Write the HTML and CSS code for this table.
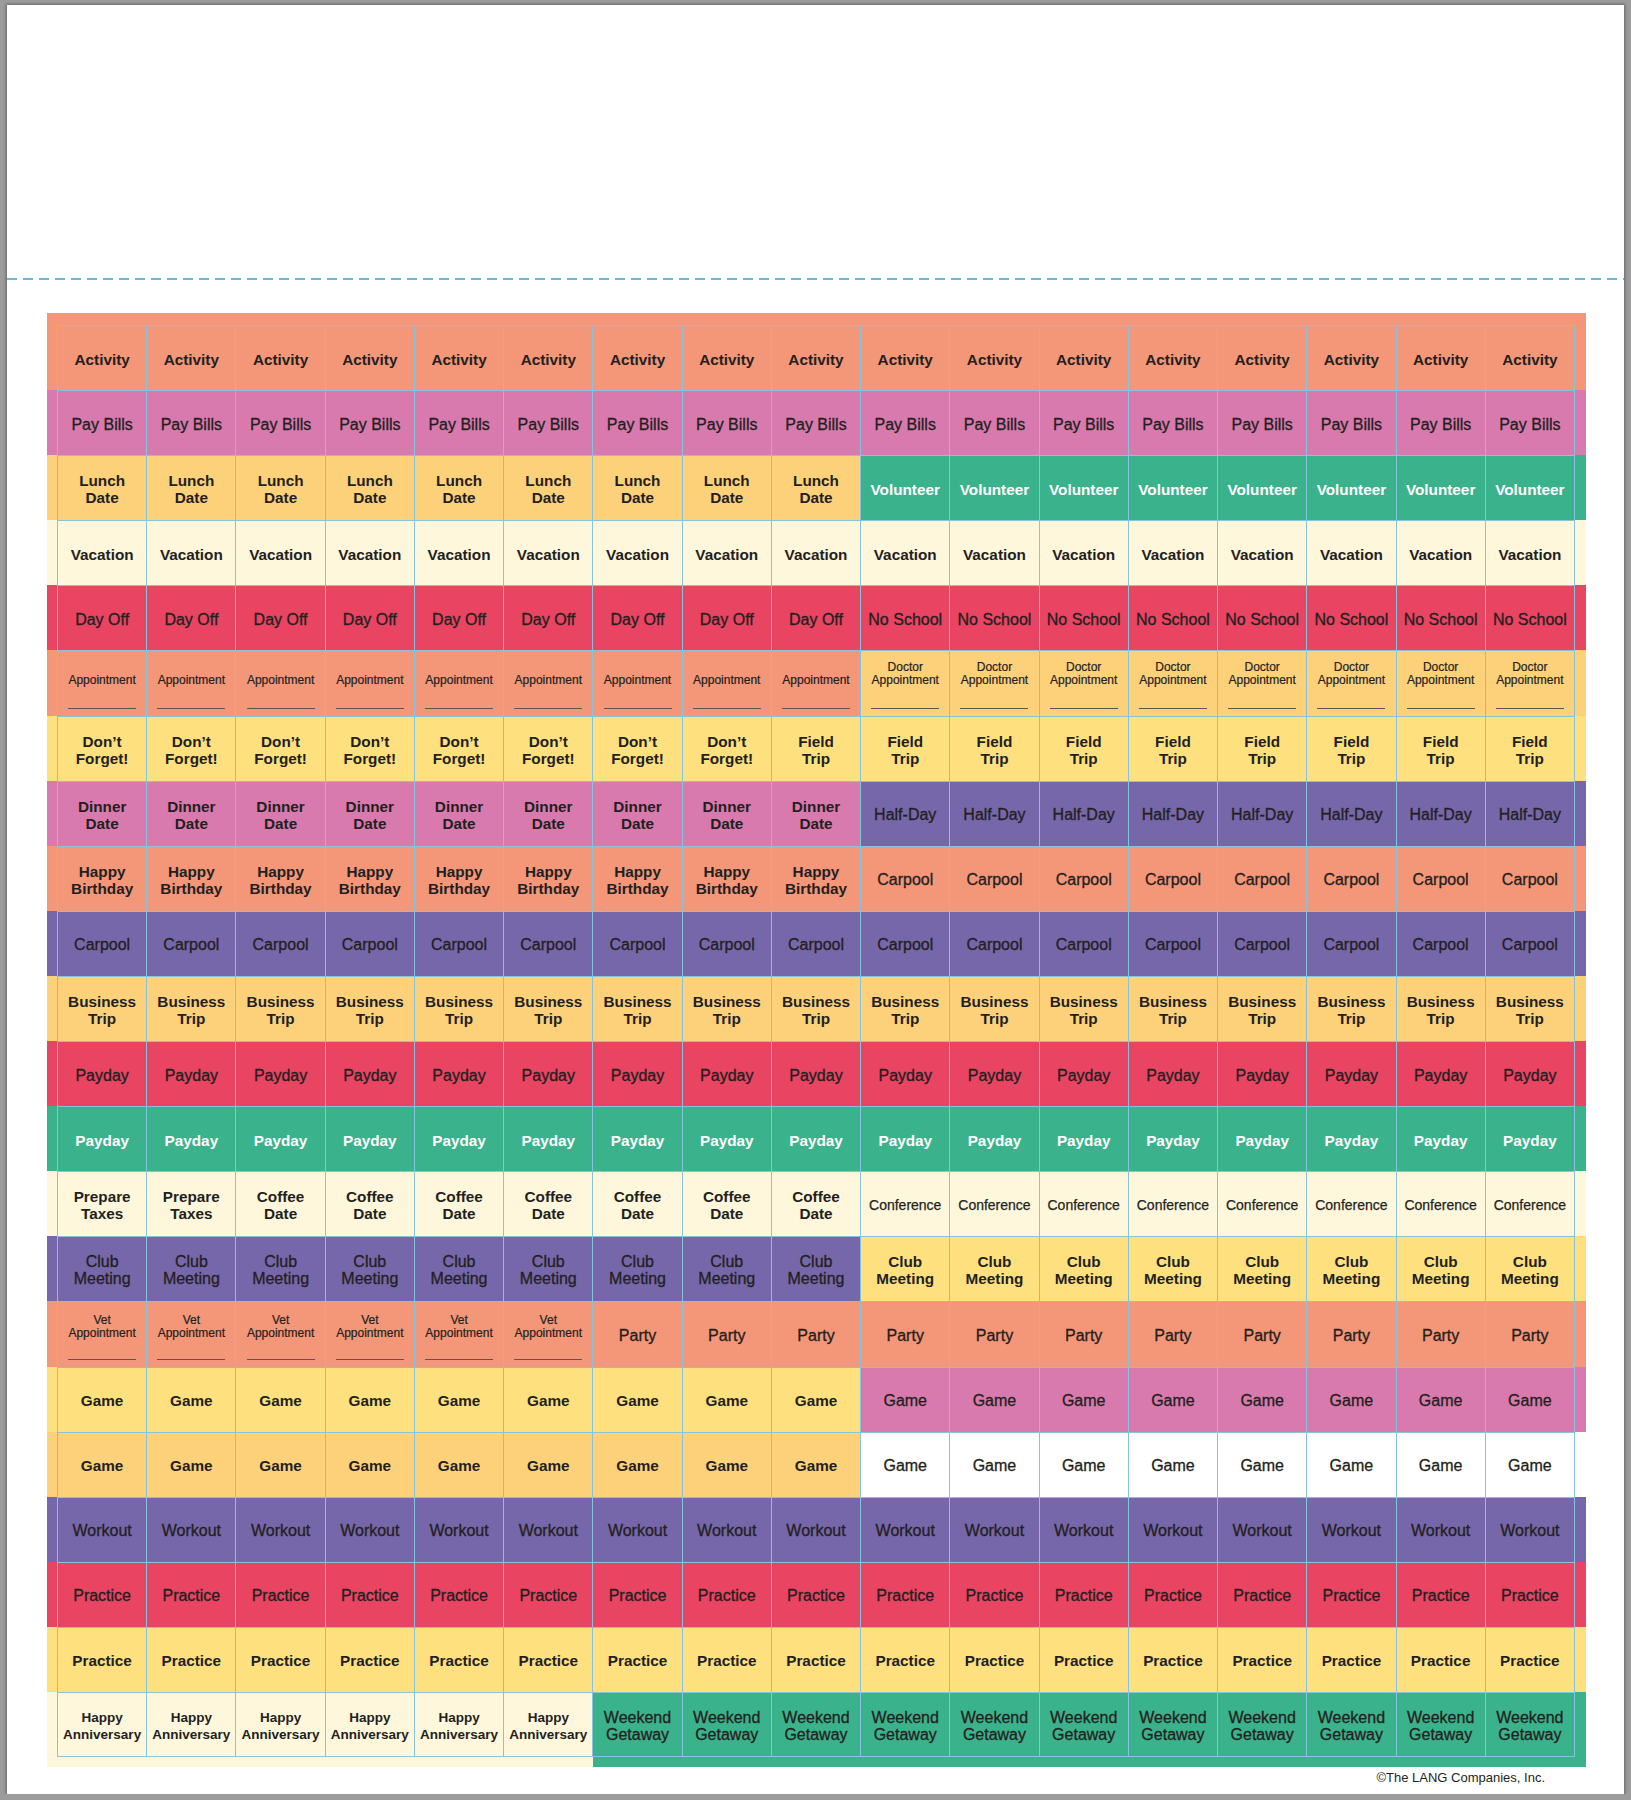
FILE: index.html
```html
<!DOCTYPE html>
<html lang="en">
<head>
<meta charset="utf-8">
<title>Activity Stickers</title>
<link rel="stylesheet" href="styles.css">
</head>
<body>
<div class="page">
  <div class="dash"></div>
  <div class="board">
    <div class="cap-top sa"></div>

    <div class="row sa fb"><i class="ex"></i>
      <div class="c">Activity</div><div class="c">Activity</div><div class="c">Activity</div><div class="c">Activity</div><div class="c">Activity</div><div class="c">Activity</div><div class="c">Activity</div><div class="c">Activity</div><div class="c">Activity</div><div class="c">Activity</div><div class="c">Activity</div><div class="c">Activity</div><div class="c">Activity</div><div class="c">Activity</div><div class="c">Activity</div><div class="c">Activity</div><div class="c">Activity</div>
    <i class="ex"></i></div>

    <div class="row pk fr"><i class="ex"></i>
      <div class="c">Pay Bills</div><div class="c">Pay Bills</div><div class="c">Pay Bills</div><div class="c">Pay Bills</div><div class="c">Pay Bills</div><div class="c">Pay Bills</div><div class="c">Pay Bills</div><div class="c">Pay Bills</div><div class="c">Pay Bills</div><div class="c">Pay Bills</div><div class="c">Pay Bills</div><div class="c">Pay Bills</div><div class="c">Pay Bills</div><div class="c">Pay Bills</div><div class="c">Pay Bills</div><div class="c">Pay Bills</div><div class="c">Pay Bills</div>
    <i class="ex"></i></div>

    <div class="row or fb"><i class="ex"></i>
      <div class="c">Lunch<br>Date</div><div class="c">Lunch<br>Date</div><div class="c">Lunch<br>Date</div><div class="c">Lunch<br>Date</div><div class="c">Lunch<br>Date</div><div class="c">Lunch<br>Date</div><div class="c">Lunch<br>Date</div><div class="c">Lunch<br>Date</div><div class="c">Lunch<br>Date</div>
      <div class="c gr wt">Volunteer</div><div class="c gr wt">Volunteer</div><div class="c gr wt">Volunteer</div><div class="c gr wt">Volunteer</div><div class="c gr wt">Volunteer</div><div class="c gr wt">Volunteer</div><div class="c gr wt">Volunteer</div><div class="c gr wt">Volunteer</div>
    <i class="ex gr"></i></div>

    <div class="row cr fb"><i class="ex"></i>
      <div class="c">Vacation</div><div class="c">Vacation</div><div class="c">Vacation</div><div class="c">Vacation</div><div class="c">Vacation</div><div class="c">Vacation</div><div class="c">Vacation</div><div class="c">Vacation</div><div class="c">Vacation</div><div class="c">Vacation</div><div class="c">Vacation</div><div class="c">Vacation</div><div class="c">Vacation</div><div class="c">Vacation</div><div class="c">Vacation</div><div class="c">Vacation</div><div class="c">Vacation</div>
    <i class="ex"></i></div>

    <div class="row rd fr"><i class="ex"></i>
      <div class="c">Day Off</div><div class="c">Day Off</div><div class="c">Day Off</div><div class="c">Day Off</div><div class="c">Day Off</div><div class="c">Day Off</div><div class="c">Day Off</div><div class="c">Day Off</div><div class="c">Day Off</div>
      <div class="c">No School</div><div class="c">No School</div><div class="c">No School</div><div class="c">No School</div><div class="c">No School</div><div class="c">No School</div><div class="c">No School</div><div class="c">No School</div>
    <i class="ex"></i></div>

    <div class="row sa fs"><i class="ex"></i>
      <div class="c ap"><span>Appointment</span><u></u></div><div class="c ap"><span>Appointment</span><u></u></div><div class="c ap"><span>Appointment</span><u></u></div><div class="c ap"><span>Appointment</span><u></u></div><div class="c ap"><span>Appointment</span><u></u></div><div class="c ap"><span>Appointment</span><u></u></div><div class="c ap"><span>Appointment</span><u></u></div><div class="c ap"><span>Appointment</span><u></u></div><div class="c ap"><span>Appointment</span><u></u></div>
      <div class="c ap or"><span>Doctor<br>Appointment</span><u></u></div><div class="c ap or"><span>Doctor<br>Appointment</span><u></u></div><div class="c ap or"><span>Doctor<br>Appointment</span><u></u></div><div class="c ap or"><span>Doctor<br>Appointment</span><u></u></div><div class="c ap or"><span>Doctor<br>Appointment</span><u></u></div><div class="c ap or"><span>Doctor<br>Appointment</span><u></u></div><div class="c ap or"><span>Doctor<br>Appointment</span><u></u></div><div class="c ap or"><span>Doctor<br>Appointment</span><u></u></div>
    <i class="ex or"></i></div>

    <div class="row ye fb"><i class="ex"></i>
      <div class="c">Don’t<br>Forget!</div><div class="c">Don’t<br>Forget!</div><div class="c">Don’t<br>Forget!</div><div class="c">Don’t<br>Forget!</div><div class="c">Don’t<br>Forget!</div><div class="c">Don’t<br>Forget!</div><div class="c">Don’t<br>Forget!</div><div class="c">Don’t<br>Forget!</div>
      <div class="c">Field<br>Trip</div><div class="c">Field<br>Trip</div><div class="c">Field<br>Trip</div><div class="c">Field<br>Trip</div><div class="c">Field<br>Trip</div><div class="c">Field<br>Trip</div><div class="c">Field<br>Trip</div><div class="c">Field<br>Trip</div><div class="c">Field<br>Trip</div>
    <i class="ex"></i></div>

    <div class="row pk fb"><i class="ex"></i>
      <div class="c">Dinner<br>Date</div><div class="c">Dinner<br>Date</div><div class="c">Dinner<br>Date</div><div class="c">Dinner<br>Date</div><div class="c">Dinner<br>Date</div><div class="c">Dinner<br>Date</div><div class="c">Dinner<br>Date</div><div class="c">Dinner<br>Date</div><div class="c">Dinner<br>Date</div>
      <div class="c pu fr">Half-Day</div><div class="c pu fr">Half-Day</div><div class="c pu fr">Half-Day</div><div class="c pu fr">Half-Day</div><div class="c pu fr">Half-Day</div><div class="c pu fr">Half-Day</div><div class="c pu fr">Half-Day</div><div class="c pu fr">Half-Day</div>
    <i class="ex pu"></i></div>

    <div class="row sa fb"><i class="ex"></i>
      <div class="c">Happy<br>Birthday</div><div class="c">Happy<br>Birthday</div><div class="c">Happy<br>Birthday</div><div class="c">Happy<br>Birthday</div><div class="c">Happy<br>Birthday</div><div class="c">Happy<br>Birthday</div><div class="c">Happy<br>Birthday</div><div class="c">Happy<br>Birthday</div><div class="c">Happy<br>Birthday</div>
      <div class="c fr">Carpool</div><div class="c fr">Carpool</div><div class="c fr">Carpool</div><div class="c fr">Carpool</div><div class="c fr">Carpool</div><div class="c fr">Carpool</div><div class="c fr">Carpool</div><div class="c fr">Carpool</div>
    <i class="ex"></i></div>

    <div class="row pu fr"><i class="ex"></i>
      <div class="c">Carpool</div><div class="c">Carpool</div><div class="c">Carpool</div><div class="c">Carpool</div><div class="c">Carpool</div><div class="c">Carpool</div><div class="c">Carpool</div><div class="c">Carpool</div><div class="c">Carpool</div><div class="c">Carpool</div><div class="c">Carpool</div><div class="c">Carpool</div><div class="c">Carpool</div><div class="c">Carpool</div><div class="c">Carpool</div><div class="c">Carpool</div><div class="c">Carpool</div>
    <i class="ex"></i></div>

    <div class="row or fb"><i class="ex"></i>
      <div class="c">Business<br>Trip</div><div class="c">Business<br>Trip</div><div class="c">Business<br>Trip</div><div class="c">Business<br>Trip</div><div class="c">Business<br>Trip</div><div class="c">Business<br>Trip</div><div class="c">Business<br>Trip</div><div class="c">Business<br>Trip</div><div class="c">Business<br>Trip</div><div class="c">Business<br>Trip</div><div class="c">Business<br>Trip</div><div class="c">Business<br>Trip</div><div class="c">Business<br>Trip</div><div class="c">Business<br>Trip</div><div class="c">Business<br>Trip</div><div class="c">Business<br>Trip</div><div class="c">Business<br>Trip</div>
    <i class="ex"></i></div>

    <div class="row rd fr"><i class="ex"></i>
      <div class="c">Payday</div><div class="c">Payday</div><div class="c">Payday</div><div class="c">Payday</div><div class="c">Payday</div><div class="c">Payday</div><div class="c">Payday</div><div class="c">Payday</div><div class="c">Payday</div><div class="c">Payday</div><div class="c">Payday</div><div class="c">Payday</div><div class="c">Payday</div><div class="c">Payday</div><div class="c">Payday</div><div class="c">Payday</div><div class="c">Payday</div>
    <i class="ex"></i></div>

    <div class="row gr fb wt"><i class="ex"></i>
      <div class="c">Payday</div><div class="c">Payday</div><div class="c">Payday</div><div class="c">Payday</div><div class="c">Payday</div><div class="c">Payday</div><div class="c">Payday</div><div class="c">Payday</div><div class="c">Payday</div><div class="c">Payday</div><div class="c">Payday</div><div class="c">Payday</div><div class="c">Payday</div><div class="c">Payday</div><div class="c">Payday</div><div class="c">Payday</div><div class="c">Payday</div>
    <i class="ex"></i></div>

    <div class="row cr fb"><i class="ex"></i>
      <div class="c">Prepare<br>Taxes</div><div class="c">Prepare<br>Taxes</div>
      <div class="c">Coffee<br>Date</div><div class="c">Coffee<br>Date</div><div class="c">Coffee<br>Date</div><div class="c">Coffee<br>Date</div><div class="c">Coffee<br>Date</div><div class="c">Coffee<br>Date</div><div class="c">Coffee<br>Date</div>
      <div class="c fc">Conference</div><div class="c fc">Conference</div><div class="c fc">Conference</div><div class="c fc">Conference</div><div class="c fc">Conference</div><div class="c fc">Conference</div><div class="c fc">Conference</div><div class="c fc">Conference</div>
    <i class="ex"></i></div>

    <div class="row pu fr"><i class="ex"></i>
      <div class="c">Club<br>Meeting</div><div class="c">Club<br>Meeting</div><div class="c">Club<br>Meeting</div><div class="c">Club<br>Meeting</div><div class="c">Club<br>Meeting</div><div class="c">Club<br>Meeting</div><div class="c">Club<br>Meeting</div><div class="c">Club<br>Meeting</div><div class="c">Club<br>Meeting</div>
      <div class="c ye fb">Club<br>Meeting</div><div class="c ye fb">Club<br>Meeting</div><div class="c ye fb">Club<br>Meeting</div><div class="c ye fb">Club<br>Meeting</div><div class="c ye fb">Club<br>Meeting</div><div class="c ye fb">Club<br>Meeting</div><div class="c ye fb">Club<br>Meeting</div><div class="c ye fb">Club<br>Meeting</div>
    <i class="ex ye"></i></div>

    <div class="row sa fs"><i class="ex"></i>
      <div class="c ap vet"><span>Vet<br>Appointment</span><u></u></div><div class="c ap vet"><span>Vet<br>Appointment</span><u></u></div><div class="c ap vet"><span>Vet<br>Appointment</span><u></u></div><div class="c ap vet"><span>Vet<br>Appointment</span><u></u></div><div class="c ap vet"><span>Vet<br>Appointment</span><u></u></div><div class="c ap vet"><span>Vet<br>Appointment</span><u></u></div>
      <div class="c fr">Party</div><div class="c fr">Party</div><div class="c fr">Party</div><div class="c fr">Party</div><div class="c fr">Party</div><div class="c fr">Party</div><div class="c fr">Party</div><div class="c fr">Party</div><div class="c fr">Party</div><div class="c fr">Party</div><div class="c fr">Party</div>
    <i class="ex"></i></div>

    <div class="row ye fb"><i class="ex"></i>
      <div class="c">Game</div><div class="c">Game</div><div class="c">Game</div><div class="c">Game</div><div class="c">Game</div><div class="c">Game</div><div class="c">Game</div><div class="c">Game</div><div class="c">Game</div>
      <div class="c pk fr">Game</div><div class="c pk fr">Game</div><div class="c pk fr">Game</div><div class="c pk fr">Game</div><div class="c pk fr">Game</div><div class="c pk fr">Game</div><div class="c pk fr">Game</div><div class="c pk fr">Game</div>
    <i class="ex pk"></i></div>

    <div class="row or fb"><i class="ex"></i>
      <div class="c">Game</div><div class="c">Game</div><div class="c">Game</div><div class="c">Game</div><div class="c">Game</div><div class="c">Game</div><div class="c">Game</div><div class="c">Game</div><div class="c">Game</div>
      <div class="c wh fr">Game</div><div class="c wh fr">Game</div><div class="c wh fr">Game</div><div class="c wh fr">Game</div><div class="c wh fr">Game</div><div class="c wh fr">Game</div><div class="c wh fr">Game</div><div class="c wh fr">Game</div>
    <i class="ex wh"></i></div>

    <div class="row pu fr"><i class="ex"></i>
      <div class="c">Workout</div><div class="c">Workout</div><div class="c">Workout</div><div class="c">Workout</div><div class="c">Workout</div><div class="c">Workout</div><div class="c">Workout</div><div class="c">Workout</div><div class="c">Workout</div><div class="c">Workout</div><div class="c">Workout</div><div class="c">Workout</div><div class="c">Workout</div><div class="c">Workout</div><div class="c">Workout</div><div class="c">Workout</div><div class="c">Workout</div>
    <i class="ex"></i></div>

    <div class="row rd fr"><i class="ex"></i>
      <div class="c">Practice</div><div class="c">Practice</div><div class="c">Practice</div><div class="c">Practice</div><div class="c">Practice</div><div class="c">Practice</div><div class="c">Practice</div><div class="c">Practice</div><div class="c">Practice</div><div class="c">Practice</div><div class="c">Practice</div><div class="c">Practice</div><div class="c">Practice</div><div class="c">Practice</div><div class="c">Practice</div><div class="c">Practice</div><div class="c">Practice</div>
    <i class="ex"></i></div>

    <div class="row ye fb"><i class="ex"></i>
      <div class="c">Practice</div><div class="c">Practice</div><div class="c">Practice</div><div class="c">Practice</div><div class="c">Practice</div><div class="c">Practice</div><div class="c">Practice</div><div class="c">Practice</div><div class="c">Practice</div><div class="c">Practice</div><div class="c">Practice</div><div class="c">Practice</div><div class="c">Practice</div><div class="c">Practice</div><div class="c">Practice</div><div class="c">Practice</div><div class="c">Practice</div>
    <i class="ex"></i></div>

    <div class="row cr fa last"><i class="ex"></i>
      <div class="c">Happy<br>Anniversary</div><div class="c">Happy<br>Anniversary</div><div class="c">Happy<br>Anniversary</div><div class="c">Happy<br>Anniversary</div><div class="c">Happy<br>Anniversary</div><div class="c">Happy<br>Anniversary</div>
      <div class="c gr fr">Weekend<br>Getaway</div><div class="c gr fr">Weekend<br>Getaway</div><div class="c gr fr">Weekend<br>Getaway</div><div class="c gr fr">Weekend<br>Getaway</div><div class="c gr fr">Weekend<br>Getaway</div><div class="c gr fr">Weekend<br>Getaway</div><div class="c gr fr">Weekend<br>Getaway</div><div class="c gr fr">Weekend<br>Getaway</div><div class="c gr fr">Weekend<br>Getaway</div><div class="c gr fr">Weekend<br>Getaway</div><div class="c gr fr">Weekend<br>Getaway</div>
    <i class="ex gr"></i></div>

    <div class="cap-bot"><i class="seg-l cr"></i><i class="seg-r gr"></i></div>
    <div class="copy">©The LANG Companies, Inc.</div>
  </div>
</div>
</body>
</html>
```
FILE: styles.css
```css
* { box-sizing: border-box; }
html, body { margin: 0; }
body {
  background: #9c9c9c;
  font-family: "Liberation Sans", Arial, sans-serif;
  color: #231f20;
}
.page {
  margin: 5px 7px 0;
  height: 1789px;
  background: #fff;
  box-shadow: 0 0 3px 1px rgba(0, 0, 0, 0.35);
  padding-top: 273px;
}
.dash {
  height: 2px;
  background: repeating-linear-gradient(90deg, #6ab7df 0 10px, transparent 10px 16px);
}
.board {
  width: 1539px;
  margin: 33px 0 0 40px;
}
.cap-top { height: 12px; }
.row {
  display: flex;
  height: 65.1px;
}
.ex {
  display: block;
  flex: none;
  width: 10px;
}
.ex:last-child { width: 11px; }
.c {
  flex: 1 1 0;
  min-width: 0;
  border-top: 1px solid #86c3de;
  border-right: 1px solid #86c3de;
  display: flex;
  align-items: center;
  justify-content: center;
  text-align: center;
  line-height: 17px;
  padding-top: 2px;
}
.ex + .c { border-left: 1px solid #86c3de; }
.last .c { border-bottom: 1px solid #86c3de; }

/* fonts */
.fb { font-weight: 700; font-size: 15.3px; -webkit-text-stroke: 0; }
.fr { font-weight: 400; font-size: 16px; -webkit-text-stroke: 0.3px currentColor; }
.fa { font-weight: 700; font-size: 13.5px; }
.fs { font-weight: 400; font-size: 12px; -webkit-text-stroke: 0.2px currentColor; }
.fc { font-weight: 400; font-size: 14px; -webkit-text-stroke: 0.25px currentColor; }
.wt { color: #fff; }
.gr.fr { color: #231f20; }

/* appointment cells */
.ap {
  flex-direction: column;
  justify-content: flex-end;
  padding: 0 0 7px;
  line-height: 13px;
}
.ap u {
  display: block;
  width: 68px;
  height: 1px;
  background: #5a5556;
  margin-top: 21px;
}
.ap.vet u { margin-top: 19px; }

/* colours */
.sa { background: #f49678; }
.pk { background: #d97aae; }
.or { background: #fdd17a; }
.gr { background: #3ab38c; }
.cr { background: #fef7dc; }
.rd { background: #e94462; }
.ye { background: #fee17e; }
.pu { background: #7667ab; }
.wh { background: #ffffff; }

.cap-bot {
  display: flex;
  height: 10px;
}
.seg-l { display: block; width: 545.8px; }
.seg-r { display: block; flex: 1; }

.copy {
  text-align: right;
  padding-right: 41px;
  font-size: 13px;
  line-height: 14px;
  margin-top: 4px;
}
```
